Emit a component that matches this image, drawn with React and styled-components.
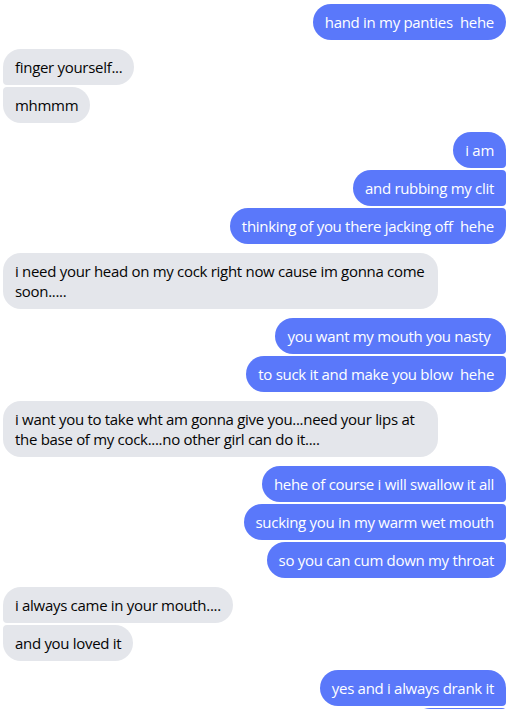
import React from 'react';
import styled, { createGlobalStyle } from 'styled-components';

const GlobalStyle = createGlobalStyle`
  body {
    margin: 0;
    background: #ffffff;
    font-family: "Segoe UI", "Open Sans", "Noto Sans", sans-serif;
  }
`;

const Thread = styled.div`
  display: flex;
  flex-direction: column;
  gap: 9px;
  padding: 4px 11px 0 3px;
  height: 709px;
  overflow: hidden;
  box-sizing: border-box;
`;

const Group = styled.div`
  display: flex;
  flex-direction: column;
  align-items: ${p => (p.mine ? 'flex-end' : 'flex-start')};
  gap: 2px;
`;

const big = '18px';
const small = '4px';

const radius = (mine, pos) => {
  // pos: single | first | middle | last
  const top = pos === 'single' || pos === 'first' ? big : small;
  const bottom = pos === 'single' || pos === 'last' ? big : small;
  return mine
    ? `${big} ${top} ${bottom} ${big}`
    : `${top} ${big} ${big} ${bottom}`;
};

const Bubble = styled.div`
  max-width: 411px;
  min-width: ${p => p.minW || 0}px;
  padding: 8px 12px;
  font-size: 15px;
  line-height: 20px;
  letter-spacing: -0.3px;
  white-space: pre-wrap;
  background: ${p => (p.mine ? '#5a78fa' : '#e4e6eb')};
  color: ${p => (p.mine ? '#ffffff' : '#050505')};
  border-radius: ${p => radius(p.mine, p.pos)};
`;

const groups = [
  { mine: true, msgs: ['hand in my panties  hehe'] },
  { mine: false, msgs: ['finger yourself...', 'mhmmm'] },
  { mine: true, msgs: ['i am', 'and rubbing my clit', 'thinking of you there jacking off  hehe'] },
  { mine: false, msgs: ['i need your head on my cock right now cause im gonna come soon.....'] },
  { mine: true, msgs: ['you want my mouth you nasty ', 'to suck it and make you blow  hehe'] },
  { mine: false, msgs: ['i want you to take wht am gonna give you...need your lips at the base of my cock....no other girl can do it....'] },
  { mine: true, msgs: ['hehe of course i will swallow it all', 'sucking you in my warm wet mouth', 'so you can cum down my throat'] },
  { mine: false, msgs: ['i always came in your mouth....', 'and you loved it'] },
  // the next bubble is cut off by the bottom of the window
  { mine: true, msgs: ['yes and i always drank it', { text: '\u00a0', minW: 70 }] },
];

const position = (i, n) => {
  if (n === 1) return 'single';
  if (i === 0) return 'first';
  if (i === n - 1) return 'last';
  return 'middle';
};

export default function App() {
  return (
    <>
      <GlobalStyle />
      <Thread>
        {groups.map((g, gi) => (
          <Group key={gi} mine={g.mine}>
            {g.msgs.map((m, i) => (
              <Bubble
                key={i}
                mine={g.mine}
                pos={position(i, g.msgs.length)}
                minW={typeof m === 'string' ? 0 : m.minW}
              >
                {typeof m === 'string' ? m : m.text}
              </Bubble>
            ))}
          </Group>
        ))}
      </Thread>
    </>
  );
}
